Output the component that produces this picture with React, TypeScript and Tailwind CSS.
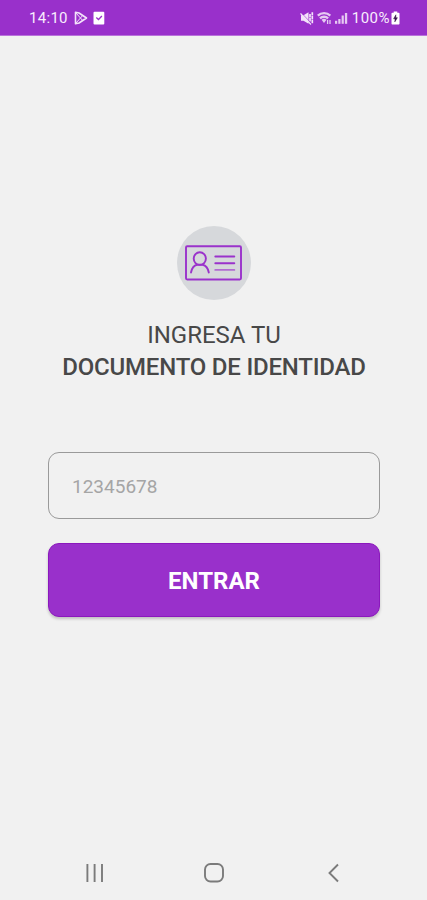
function PlayIcon() {
  return (
    <svg className="ml-[5px] h-[14px] w-[14px]" viewBox="0 0 14 14" fill="none" stroke="#f3e3fa" strokeWidth="1.6" strokeLinejoin="round">
      <path d="M1.5 1.2 5 2l7.5 5L5 12l-3.5.8Z" />
      <path d="M2 2 8.5 9.3M2 12 8.5 4.7" strokeWidth="1" />
    </svg>
  )
}

function TaskIcon() {
  return (
    <svg className="ml-[5px] h-[14px] w-[12px]" viewBox="0 0 12 14" fill="none">
      <rect x="0.5" y="0.8" width="10.8" height="12.6" rx="1" fill="#fff" />
      <path d="m3.3 6.5 2.2 2L8.9 5" stroke="#9930cb" strokeWidth="1.3" />
    </svg>
  )
}

function MuteIcon() {
  return (
    <svg className="h-[14px] w-[14px]" viewBox="0 0 14 14" fill="none" stroke="#f3e3fa" strokeWidth="1.7">
      <path d="M1 4.2h2.5L8.5 1.2v11.6l-5-3H1Z" fill="#f3e3fa" stroke="none" />
      <path d="M12.3 1.2v11.6M10 3v8" strokeDasharray="3.2 .6" />
      <path d="m1 1.5 11 11.5" stroke="#9930cb" strokeWidth=".7" />
      <path d="m.5 2.5 10.5 11" strokeWidth="1.1" />
    </svg>
  )
}

function WifiIcon() {
  return (
    <svg className="ml-[3px] h-[14px] w-[15px]" viewBox="0 0 15 14" fill="none" stroke="#e6c9f2" strokeWidth="2.3">
      <path d="M.8 4.6c3.6-3.4 9-3.4 12.5 0M3 7.4c2.3-2.2 5.9-2.2 8.1 0" />
      <path d="M4.6 8.8c1.4-1.4 3.5-1.4 4.9 0L7 12Z" fill="#e6c9f2" stroke="none" />
      <path d="M10.6 9v4M13 9v4" strokeWidth="1.3" />
    </svg>
  )
}

function SignalIcon() {
  return (
    <svg className="ml-[3px] h-[14px] w-[13px]" viewBox="0 0 13 14" fill="#e6c9f2">
      <rect x="0" y="9.8" width="2.2" height="3" />
      <rect x="3.3" y="8" width="2.2" height="4.8" />
      <rect x="6.6" y="4.5" width="2.2" height="8.3" />
      <rect x="9.9" y="2" width="2.3" height="10.8" />
    </svg>
  )
}

function BatteryIcon() {
  return (
    <svg className="ml-[1px] h-[14px] w-[9px]" viewBox="0 0 9 14">
      <path d="M2.7.6h3.6v1.2h1.4c.5 0 .8.3.8.8v9.8c0 .6-.4 1-.9 1H1.4c-.5 0-.9-.4-.9-1V2.6c0-.5.3-.8.8-.8h1.4Z" fill="#fff" />
      <path d="m4.9 3.8-2.3 4h1.5l-.3 3.1 2.6-4.2H4.8Z" fill="#35104a" stroke="#35104a" strokeWidth=".5" />
    </svg>
  )
}

function StatusBar() {
  return (
    <header className="flex h-[36px] items-center justify-between border-b border-[#b973da] bg-[#9930cb] pr-[27px] pl-[29px] text-[#f8ecfd]">
      <div className="flex items-center">
        <span className="w-[40px] pt-[2px] text-[15px] leading-none tracking-[0.3px]">14:10</span>
        <PlayIcon />
        <TaskIcon />
      </div>
      <div className="flex items-center">
        <MuteIcon />
        <WifiIcon />
        <SignalIcon />
        <span className="ml-[4px] pt-[2px] text-[15px] leading-none tracking-[0.5px]">100%</span>
        <BatteryIcon />
      </div>
    </header>
  )
}

function IdBadge() {
  return (
    <div className="flex h-[74px] w-[74px] items-center justify-center rounded-full bg-[#d6d8db]">
      <svg className="h-[36px] w-[58px]" viewBox="0 0 58 36" fill="none" stroke="#9a32cb" strokeWidth="1.9" strokeLinecap="round">
        <rect x="1" y="1.3" width="55" height="33.2" rx="1.2" />
        <ellipse cx="14.8" cy="13.6" rx="6.1" ry="6.3" />
        <path d="M6 27.5c.8-4.2 3.2-7.2 6-7.8h5.6c3.2.7 5.4 3.5 6.2 7.8" />
        <path d="M30.3 11.5h19M30.3 18.2h19" />
        <path d="M30.3 24.9h19" stroke="#b26bd2" />
      </svg>
    </div>
  )
}

function NavBar() {
  return (
    <nav className="flex h-[54px] items-center justify-between pr-[84px] pl-[85px]">
      <svg className="h-[20px] w-[20px]" viewBox="0 0 20 20" fill="none" stroke="#7b7b7b" strokeWidth="1.9">
        <path d="M2.4 1v18M9.6 1v18M17 1v18" />
      </svg>
      <svg className="h-[22px] w-[22px]" viewBox="0 0 22 22" fill="none" stroke="#7b7b7b" strokeWidth="1.9">
        <rect x="2" y="2" width="18" height="17.5" rx="5.5" />
      </svg>
      <svg className="h-[20px] w-[20px]" viewBox="0 0 20 20" fill="none" stroke="#7b7b7b" strokeWidth="1.9">
        <path d="M15 1.5 6.5 10l8.5 8.5" />
      </svg>
    </nav>
  )
}

export default function App() {
  return (
    <div className="flex h-[900px] w-full flex-col overflow-hidden bg-[#f1f1f1] font-['Roboto',sans-serif]">
      <StatusBar />

      <main className="flex flex-1 flex-col items-center pt-[190px] pr-[47px] pl-12">
        <IdBadge />

        <h1 className="mt-[19px] text-center text-[24px] leading-8 whitespace-nowrap text-[#484848]">
          <span className="block">INGRESA TU</span>
          <span className="block font-medium tracking-[-0.2px]">DOCUMENTO DE IDENTIDAD</span>
        </h1>

        <input
          type="text"
          placeholder="12345678"
          className="mt-[69px] h-[67px] w-full rounded-[11px] border border-[#9a9a9a] bg-transparent px-[23px] pt-[2px] text-[19px] outline-none placeholder:text-[#a5a5a5]"
        />

        <button className="mt-6 h-[74px] w-full rounded-[11px] border border-[#8b18bd] bg-[#9930cb] pt-[2px] text-[24px] font-bold text-white shadow-[0_2px_3px_rgba(0,0,0,0.2)]">
          ENTRAR
        </button>
      </main>

      <NavBar />
    </div>
  )
}
